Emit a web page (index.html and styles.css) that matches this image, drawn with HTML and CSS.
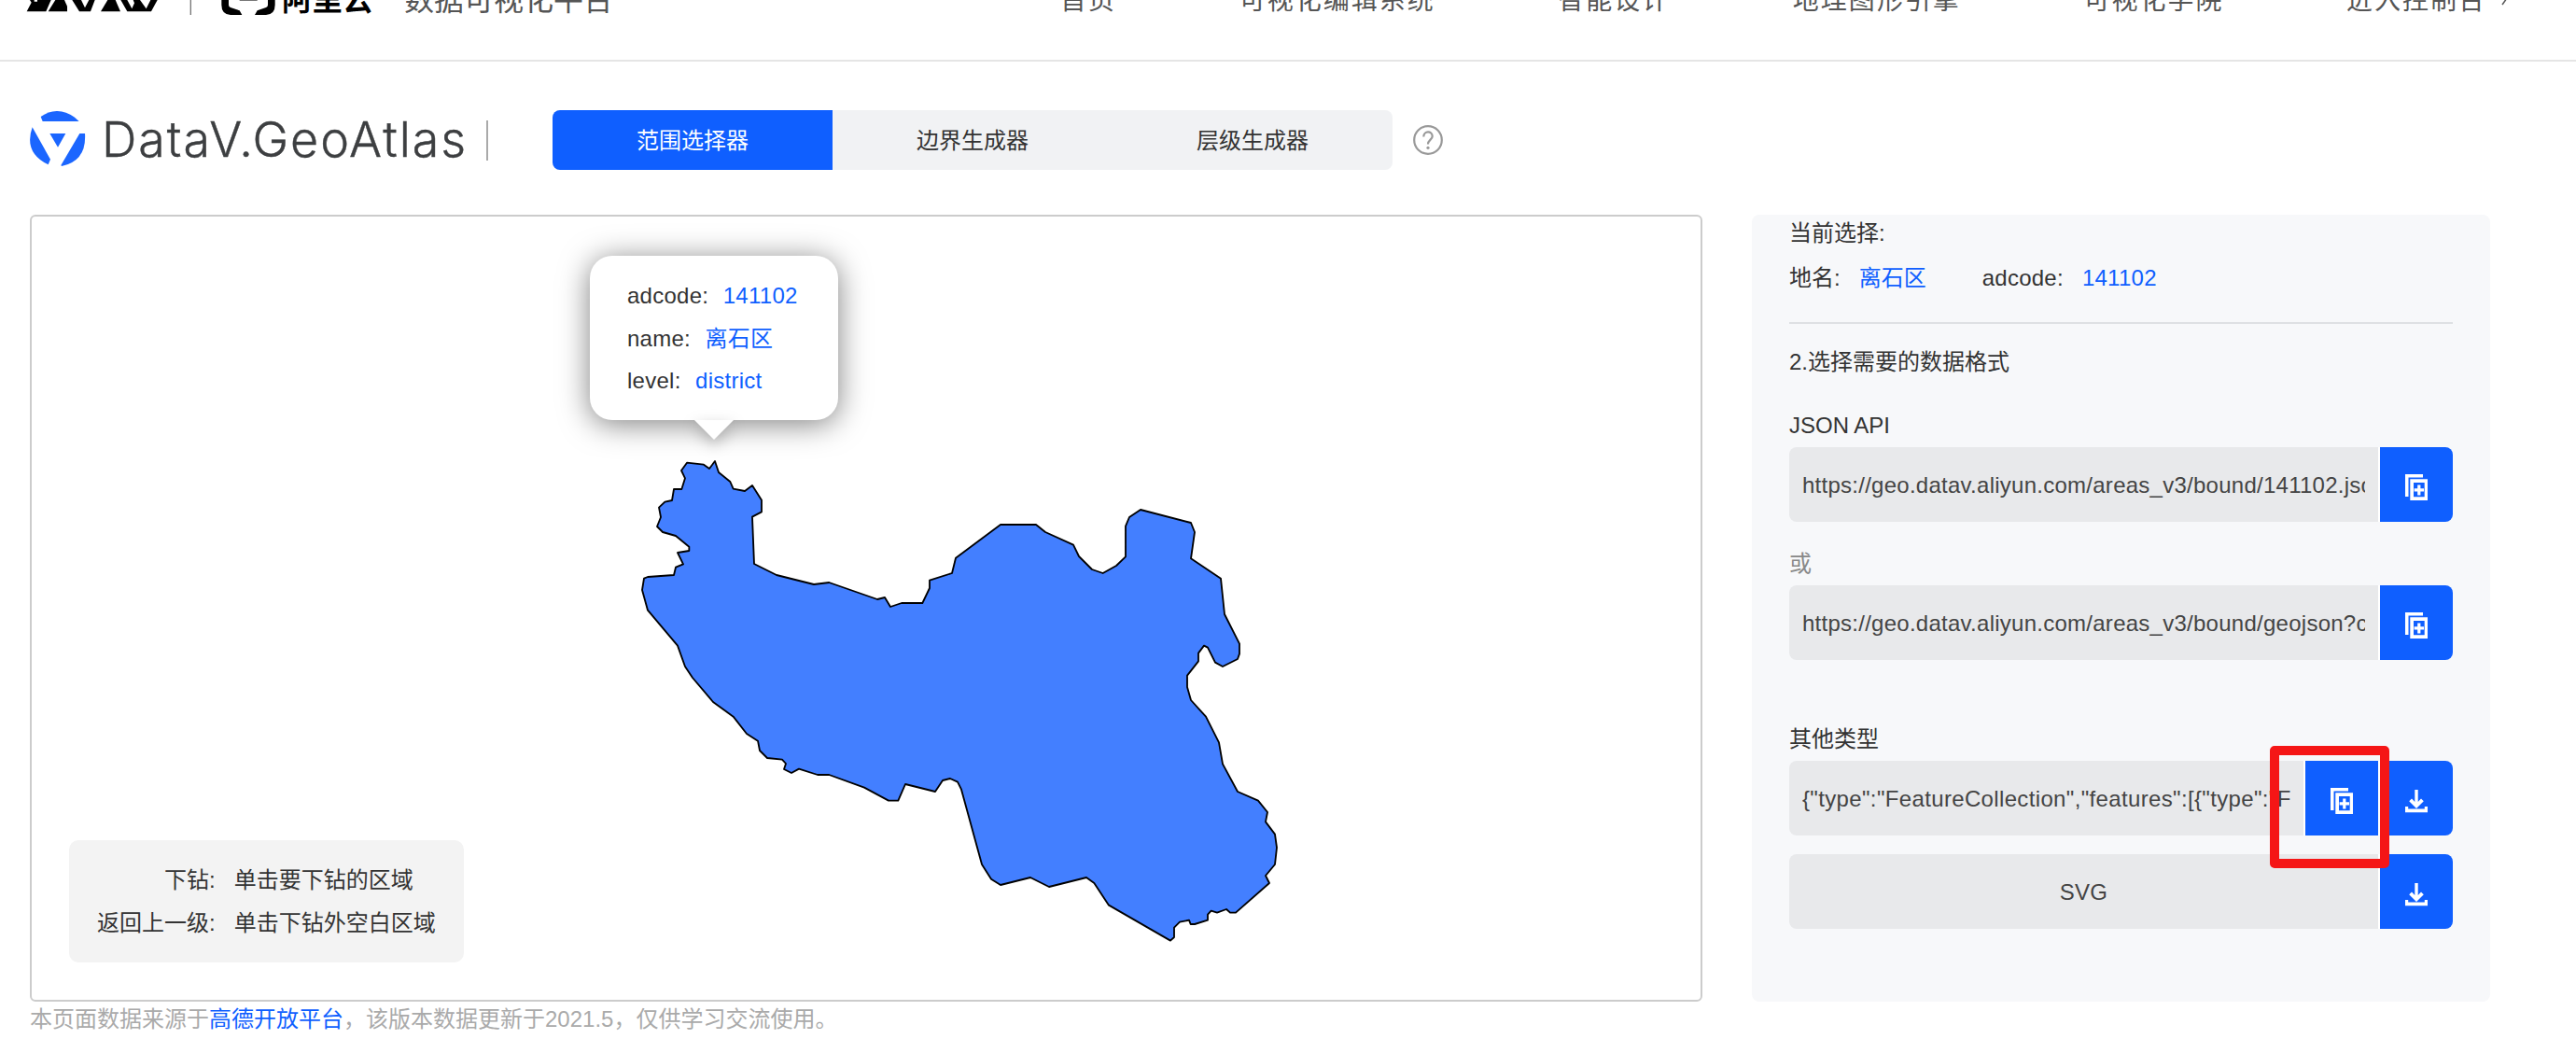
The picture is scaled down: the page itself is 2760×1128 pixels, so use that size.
FILE: index.html
```html
<!DOCTYPE html>
<html lang="zh-CN">
<head>
<meta charset="utf-8">
<title>DataV.GeoAtlas</title>
<link rel="stylesheet" href="styles.css">
</head>
<body>
<svg class="defs" width="0" height="0">
  <symbol id="copy" viewBox="0 0 24 28">
    <path fill="currentColor" fill-rule="evenodd" d="M0 0H19V3.500H3.500V24H0ZM5.300 5.300H24V28H5.300ZM9 9V24.300H20.700V9ZM13.200 11.500h3.200v3.700h3.600v3.200h-3.600v4h-3.200v-4h-3.600v-3.200h3.600Z"/>
  </symbol>
  <symbol id="download" viewBox="0 0 24 25">
    <path fill="currentColor" d="M10.300 0H13.700V13L17 9.500L19.800 12.200L12 20L4.200 12.200L7 9.500L10.300 13ZM0 18H3.200V20.500H20.800V18H24V24.300H0Z"/>
  </symbol>
</svg>
<header class="header">
  <svg class="brand" width="302" height="16" viewBox="0 0 906 48">
    <path d="M96 0H110V5H120V0H164L148 37H86L101 8Z"/>
    <path d="M178 0H207L216 20V37H155Z"/>
    <path d="M216 0H250L232 0L255 37H291L305 0H286L273 25L261 0Z"/>
    <path d="M346 0H371L387 37H324Z"/>
    <path d="M388 0H409L424 28L432 10L428 0H450L470 28L484 0H506L486 37H409Z"/>
    <path fill="#777" d="M611 0H615V50H611ZM770 0H827V3H770Z"/>
    <path d="M712 0H735V16Q735 22 741 24L770 34L778 48H741Q712 47 712 16ZM884 0H861V16Q861 22 855 24L827 34L819 48H855Q884 47 884 16Z"/>
  </svg>
  <span class="aliyun">阿里云</span>
  <span class="slogan">数据可视化平台</span>
  <nav class="nav">
    <a>首页</a><a>可视化编辑系统</a><a>智能设计</a><a>地理图形引擎</a><a>可视化学院</a><a>进入控制台</a>
    <svg class="chevron" width="8" height="16" viewBox="0 0 8 16"><path d="M1 1L6 8L1 15" fill="none" stroke="#555" stroke-width="1.500"/></svg>
  </nav>
</header>
<section class="toolbar">
  <svg class="logo" width="60" height="60" viewBox="0 0 180 180">
    <g fill="#1b66ff"><path d="M35 18Q88 -19 144 20L158 33H41Z"/><path d="M8 52L66 155L59 172Q-21 133 8 52Z"/><path d="M160 72H177Q183 160 102 177L100 174Z"/><path d="M64 72H115L90 116Z"/></g>
  </svg>
  <h1 class="title">DataV.GeoAtlas</h1>
  <i class="bar"></i>
  <div class="tabs"><span class="tab active">范围选择器</span><span class="tab">边界生成器</span><span class="tab">层级生成器</span></div>
  <svg class="help" width="32" height="32" viewBox="0 0 32 32"><circle cx="16" cy="16" r="14.800" fill="none" stroke="#999" stroke-width="2.200"/><path d="M11.300 12.500C11.300 5.800 20.700 5.800 20.700 12C20.700 15.500 16 16 16 20.500" fill="none" stroke="#999" stroke-width="2.200"/><circle cx="16" cy="24.300" r="1.600" fill="#999"/></svg>
</section>
<main class="main">
  <div class="map">
    <svg class="region" width="700" height="540" viewBox="0 0 2100 1620">
      <path d="M198 47L252 53 270 66 288 42 300 78 337 108 347 131 384 138 408 120 438 167 438 205 408 221 414 372 486 408 606 438 655 432 810 486 834 480 852 510 888 498 955 498 978 450 978 425 1050 402 1062 353 1206 246 1320 246 1350 270 1440 311 1458 348 1500 390 1535 402 1578 378 1608 349 1608 251 1620 222 1656 198 1818 240 1830 270 1818 355 1914 419 1926 534 1974 629 1974 661 1968 678 1920 702 1896 689 1872 641 1860 635 1842 659 1842 685 1806 731 1806 768 1818 810 1866 863 1908 946 1920 1015 1968 1104 2034 1133 2064 1170 2058 1201 2088 1241 2094 1284 2088 1338 2058 1374 2070 1398 1962 1493 1944 1493 1932 1482 1902 1493 1883 1487 1872 1499 1872 1517 1830 1530 1817 1530 1812 1517 1782 1523 1764 1541 1764 1572 1752 1583 1554 1469 1507 1398 1482 1380 1362 1410 1302 1380 1206 1404 1176 1385 1146 1338 1080 1097 1068 1073 1044 1062 1020 1068 996 1104 900 1080 877 1133 846 1133 768 1091 655 1050 618 1050 558 1031 534 1044 510 1032 516 1014 504 1001 456 996 432 972 426 941 390 918 347 863 282 816 216 738 192 702 168 635 72 521 54 456 60 419 72 414 156 408 162 383 186 373 168 336 205 330 205 317 162 282 120 270 102 252 114 222 108 191 127 173 150 168 156 132 181 132 192 97 180 72Z"/>
    </svg>
    <div class="tooltip">
      <div>adcode:<b>141102</b></div>
      <div>name:<b>离石区</b></div>
      <div>level:<b>district</b></div>
    </div>
    <div class="hint">
      <span>下钻:</span><span>单击要下钻的区域</span>
      <span>返回上一级:</span><span>单击下钻外空白区域</span>
    </div>
  </div>
  <aside class="panel">
    <p class="line current">当前选择:</p>
    <p class="line place">地名:<b>离石区</b><span class="code">adcode:</span><b>141102</b></p>
    <hr class="rule">
    <p class="line step">2.选择需要的数据格式</p>
    <p class="line api">JSON API</p>
    <div class="row"><div class="field">https://geo.datav.aliyun.com/areas_v3/bound/141102.json</div><span class="btn"><svg class="copy"><use href="#copy"/></svg></span></div>
    <p class="line or">或</p>
    <div class="row"><div class="field">https://geo.datav.aliyun.com/areas_v3/bound/geojson?code=141102</div><span class="btn"><svg class="copy"><use href="#copy"/></svg></span></div>
    <p class="line other">其他类型</p>
    <div class="row"><div class="field json">{"type":"FeatureCollection","features":[{"type":"Feature"</div><span class="btn mid"><svg class="copy"><use href="#copy"/></svg></span><span class="btn"><svg class="download"><use href="#download"/></svg></span><div class="mark"></div></div>
    <div class="row last"><div class="field center">SVG</div><span class="btn"><svg class="download"><use href="#download"/></svg></span></div>
  </aside>
</main>
<footer class="footer">本页面数据来源于<a>高德开放平台</a>，该版本数据更新于2021.5，仅供学习交流使用。</footer>
</body>
</html>
```
FILE: styles.css
```css
* { box-sizing: border-box; }
body { margin: 0; width: 2760px; height: 1128px; overflow: hidden; background: #fff; color: #333; font: 24px/34px "Liberation Sans", "Noto Sans CJK SC", sans-serif; }
svg { display: block; flex: none; }
b { font-weight: normal; color: #0f5fff; }
p { margin: 0; }
.defs { position: absolute; }
.header { height: 132px; margin-top: -66px; border-bottom: 2px solid #e5e5e5; display: flex; align-items: center; white-space: nowrap; }
.brand { margin-top: 18px; overflow: hidden; }
.aliyun { font-size: 32px; font-weight: bold; color: #000; width: 131px; padding-top: 1px; letter-spacing: .8px; }
.slogan { font-size: 32px; color: #555; padding-top: 1px; }
.nav { display: flex; align-items: center; gap: 131.600px; margin-left: 479px; padding-top: 3px; font-size: 28px; letter-spacing: 2px; color: #555; }
.chevron { margin: -5px 0 0 -116px; }
.toolbar { height: 164px; padding: 8px 0 0 32px; display: flex; align-items: flex-start; }
.logo { margin-top: 45px; }
.title { margin: 44px 0 0 17px; width: 412px; font: 300 52px/64px Inter, sans-serif; color: #3d3f41; letter-spacing: 1.900px; -webkit-text-stroke: .4px #3d3f41; }
.bar { width: 2px; height: 43px; background: #aaa; margin-top: 55px; }
.tabs { display: flex; height: 64px; margin: 44px 22px 0 69px; background: #f1f2f4; border-radius: 8px; overflow: hidden; }
.tab { width: 300px; line-height: 66px; text-align: center; }
.active { background: #0f5fff; color: #fff; }
.help { margin-top: 60px; }
.main { display: flex; justify-content: space-between; padding: 0 92px 0 32px; height: 843px; }
.map { width: 1792px; border: 2px solid #ccc; border-radius: 6px; position: relative; }
.region { position: absolute; left: 636px; top: 248px; }
.region path { fill: #437fff; stroke: #000; stroke-width: 5.500; stroke-linejoin: round; }
.tooltip { position: absolute; left: 598px; top: 42px; width: 266px; height: 176px; padding: 20px 40px; border-radius: 24px; background: #fff; box-shadow: 0 4px 32px rgba(0,0,0,.5); line-height: 45.500px; letter-spacing: .26px; white-space: nowrap; }
.tooltip div { height: 45.500px; }
.tooltip b { margin-left: 15.500px; }
.tooltip::after { content: ""; position: absolute; left: 112px; top: 176px; border: 21px solid transparent; border-top-color: #fff; border-bottom: 0; filter: drop-shadow(0 6px 8px rgba(0,0,0,.25)); }
.hint { position: absolute; left: 40px; top: 668px; width: 423px; height: 131px; border-radius: 10px; background: #f3f3f3; padding: 20px 30px; display: grid; grid-template-columns: auto auto; column-gap: 20px; grid-auto-rows: 46px; line-height: 46px; justify-content: start; white-space: nowrap; }
.hint span:nth-child(odd) { text-align: right; }
.panel { width: 791px; padding: 3px 40px 0; border-radius: 8px; background: #f7f8fa; }
.line { height: 34px; }
.place { margin-top: 14px; }
.place b { margin-left: 20px; }
.code { margin-left: 60px; }
.code, .code + b { letter-spacing: .26px; }
.rule { border: 0; height: 2px; background: #dee0e3; margin: 30px 0 24px; }
.api { margin-top: 34px; }
.row { display: flex; height: 80px; position: relative; margin-top: 6px; }
.field { flex: 1; min-width: 0; overflow: hidden; white-space: nowrap; line-height: 82px; letter-spacing: .26px; background: #e8e9eb; border-radius: 8px 0 0 8px; border: solid #e8e9eb; border-width: 0 14px; color: #444; }
.json { letter-spacing: .35px; }
.btn { width: 78px; margin-left: 2px; background: #0f5fff; color: #fff; border-radius: 0 8px 8px 0; display: flex; justify-content: center; padding-top: 29px; box-shadow: -2px 0 #fff; }
.mid { border-radius: 0; }
.copy { width: 24px; height: 28px; }
.download { width: 24px; height: 25px; margin-top: 2px; }
.or { margin-top: 28px; color: #888; }
.other { margin-top: 68px; }
.last { margin-top: 20px; }
.center { text-align: center; }
.mark { position: absolute; z-index: 1; left: 515px; top: -16px; width: 128px; height: 131px; border: 10px solid #f51616; border-radius: 5px; }
.footer { padding-left: 32px; margin-top: 2px; color: #aaa; white-space: nowrap; }
.footer a { color: #0f5fff; }
```
